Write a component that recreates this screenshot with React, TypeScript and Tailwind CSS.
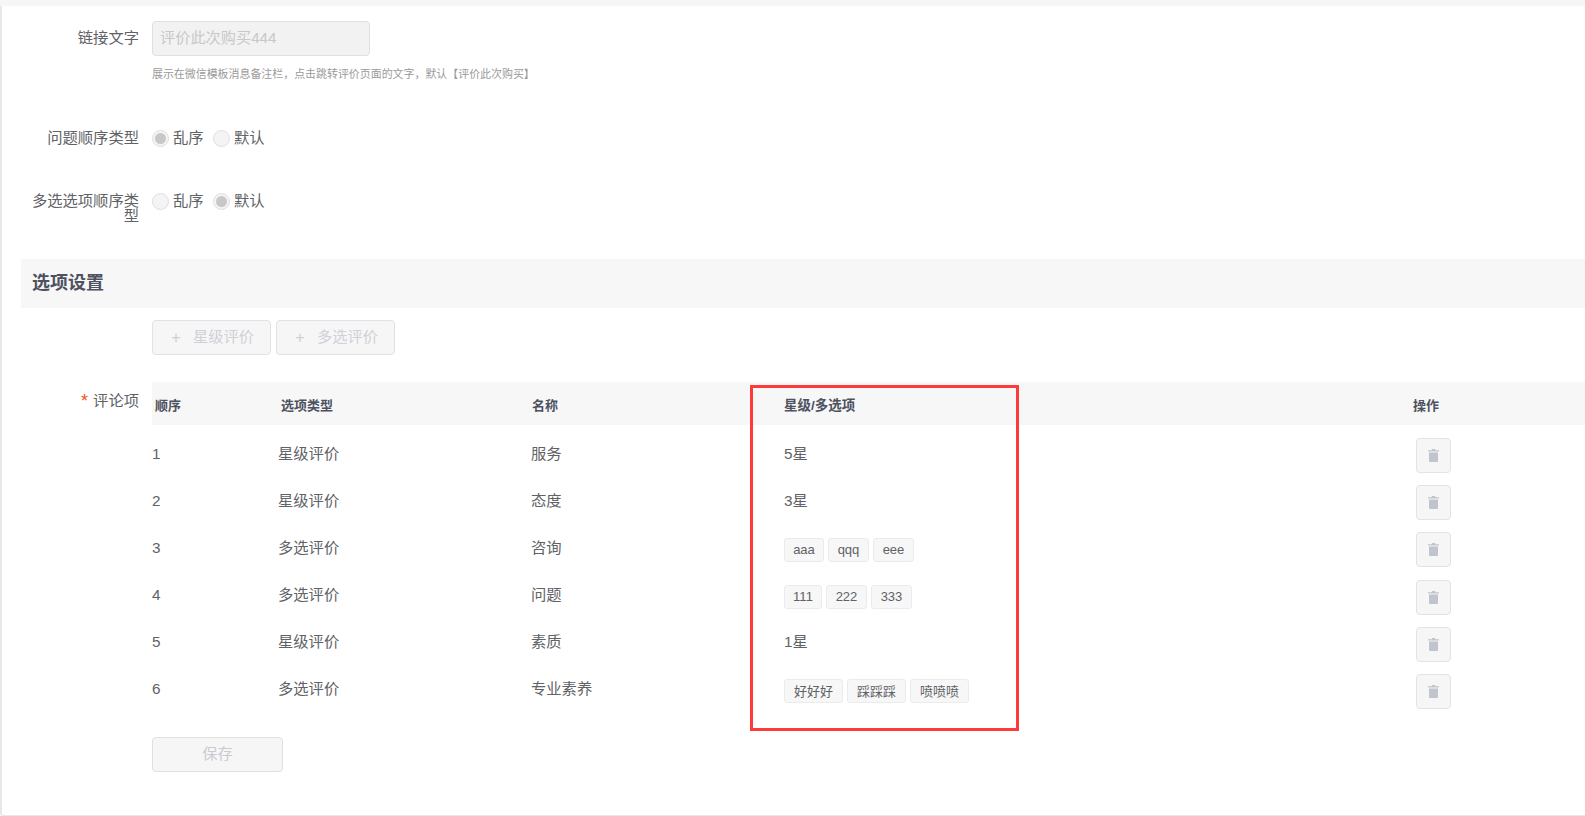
const rows = [
  { id: 1, type: '星级评价', name: '服务', value: '5星' },
  { id: 2, type: '星级评价', name: '态度', value: '3星' },
  {
    id: 3,
    type: '多选评价',
    name: '咨询',
    tags: [
      { label: 'aaa', width: 'w-[40px]' },
      { label: 'qqq', width: 'w-[41px]' },
      { label: 'eee', width: 'w-[41px]' },
    ],
  },
  {
    id: 4,
    type: '多选评价',
    name: '问题',
    tags: [
      { label: '111', width: 'w-[38px]' },
      { label: '222', width: 'w-[41px]' },
      { label: '333', width: 'w-[41px]' },
    ],
  },
  { id: 5, type: '星级评价', name: '素质', value: '1星' },
  {
    id: 6,
    type: '多选评价',
    name: '专业素养',
    tags: [
      { label: '好好好', width: 'w-[59px]' },
      { label: '踩踩踩', width: 'w-[59px]' },
      { label: '喷喷喷', width: 'w-[59px]' },
    ],
  },
];

const Radio = ({ label, checked }: { label: string; checked?: boolean }) => (
  <div className="flex items-center">
    <span className="flex h-[17px] w-[17px] items-center justify-center rounded-full border border-[#dfdfdf] bg-[#f4f4f4]">
      {checked && <span className="h-[11px] w-[11px] rounded-full bg-[#c8c8c8]" />}
    </span>
    <span className="ml-[4px] w-[31px] text-[15.3px] leading-5 text-[#606266]">{label}</span>
  </div>
);

const RadioRow = ({ title, first }: { title: string; first: boolean }) => (
  <div className="flex items-start">
    <div className="w-[137px] pl-[29px] pt-[3px] text-right text-[15.3px] leading-[14.5px] text-[#606266]">{title}</div>
    <div className="ml-[13px] flex gap-[9px]">
      <Radio label="乱序" checked={first} />
      <Radio label="默认" checked={!first} />
    </div>
  </div>
);

const TrashIcon = () => (
  <svg width="11" height="13" viewBox="0 0 11 13" fill="#c0c4cc">
    <path d="M3.8 0h3.4v1.2h3.8v1.4H0V1.2h3.8z" />
    <path d="M1 3.5h9V12a1 1 0 0 1-1 1H2a1 1 0 0 1-1-1z" />
  </svg>
);

const OutlineButton = ({ label }: { label: string }) => (
  <button className="flex h-[35px] w-[119px] items-center rounded-[4px] border border-[#e2e2e6] bg-[#f6f6f7] pl-[18px] text-[15.3px] text-[#cfd1d6]">
    <span className="text-[17px] font-light leading-none">+</span>
    <span className="ml-[12px]">{label}</span>
  </button>
);

export default function App() {
  return (
    <div className="relative h-[816px] w-full overflow-hidden bg-[#f5f6f8] pt-[6px] [font-family:'Liberation_Sans','Noto_Sans_CJK_SC',sans-serif]">
      <div className="h-[810px] rounded-bl-[4px] border-b border-l-2 border-[#e8e8e8] bg-white pt-[15px]">
        <div className="flex items-center">
          <div className="w-[137px] text-right text-[15.3px] text-[#606266]">链接文字</div>
          <div className="ml-[13px] flex h-[35px] w-[218px] items-center rounded-[4px] border border-[#e0e0e0] bg-[#f2f2f2] pl-[7px] text-[15.2px] text-[#c8c8c8]">
            评价此次购买444
          </div>
        </div>
        <p className="ml-[150px] mt-[10px] h-[16px] text-[10.95px] leading-4 text-[#9a9a9a]">
          展示在微信模板消息备注栏，点击跳转评价页面的文字，默认【评价此次购买】
        </p>

        <div className="mt-[46px]">
          <RadioRow title="问题顺序类型" first={true} />
        </div>
        <div className="mt-[43px]">
          <RadioRow title="多选选项顺序类型" first={false} />
        </div>

        <div className="ml-[19px] mt-[36px] flex h-[49px] items-center bg-[#f7f7f7] pl-[11px] text-[18px] font-bold text-[#4d5160]">
          选项设置
        </div>

        <div className="ml-[150px] mt-[12px] flex gap-[5px]">
          <OutlineButton label="星级评价" />
          <OutlineButton label="多选评价" />
        </div>

        <div className="mt-[27px] flex items-start">
          <div className="flex w-[137px] items-center justify-end pt-[9px] text-[15.3px] leading-5 text-[#606266]">
            <span className="mr-[5px] text-[18px] leading-5 text-[#f4511e]">*</span>
            评论项
          </div>
          <div className="ml-[13px] flex-1">
            <div className="grid h-[43px] grid-cols-[126px_253px_253px_629px_1fr] items-center bg-[#f7f7f7] pt-[5px] text-[13px] font-bold text-[#4d5160]">
              <div className="pl-[3px]">顺序</div>
              <div className="pl-[3px]">选项类型</div>
              <div className="pl-[1px]">名称</div>
              <div className="text-[13.5px]">星级/多选项</div>
              <div>操作</div>
            </div>
            <div className="mt-[6.9px]">
              {rows.map((row) => (
                <div
                  key={row.id}
                  className="grid h-[47.2px] grid-cols-[126px_253px_253px_629px_1fr] items-center text-[15.3px] text-[#606266]"
                >
                  <div className="pb-[3px]">{row.id}</div>
                  <div className="pb-[3px]">{row.type}</div>
                  <div className="pb-[3px]">{row.name}</div>
                  {row.tags ? (
                    <div className="flex gap-[4px]">
                      {row.tags.map((tag) => (
                        <span
                          key={tag.label}
                          className={`flex h-[24px] items-center justify-center rounded-[3px] border border-[#ebebeb] bg-[#f7f7f7] text-[13px] ${tag.width}`}
                        >
                          {tag.label}
                        </span>
                      ))}
                    </div>
                  ) : (
                    <div className="pb-[3px]">{row.value}</div>
                  )}
                  <div>
                    <button className="ml-[3px] flex h-[35px] w-[35px] items-center justify-center rounded-[4px] border border-[#e3e3e3] bg-[#f6f6f7]">
                      <TrashIcon />
                    </button>
                  </div>
                </div>
              ))}
            </div>
            <button className="mt-[21.7px] h-[35px] w-[131px] rounded-[4px] border border-[#e0e0e0] bg-[#f6f6f7] text-[15.3px] text-[#c9cbd0]">
              保存
            </button>
          </div>
        </div>
      </div>
      {/* 截图上的红色标注框 */}
      <div className="absolute left-[750px] top-[385px] h-[346px] w-[269px] border-[3px] border-[#ff3a3a]" />
    </div>
  );
}
